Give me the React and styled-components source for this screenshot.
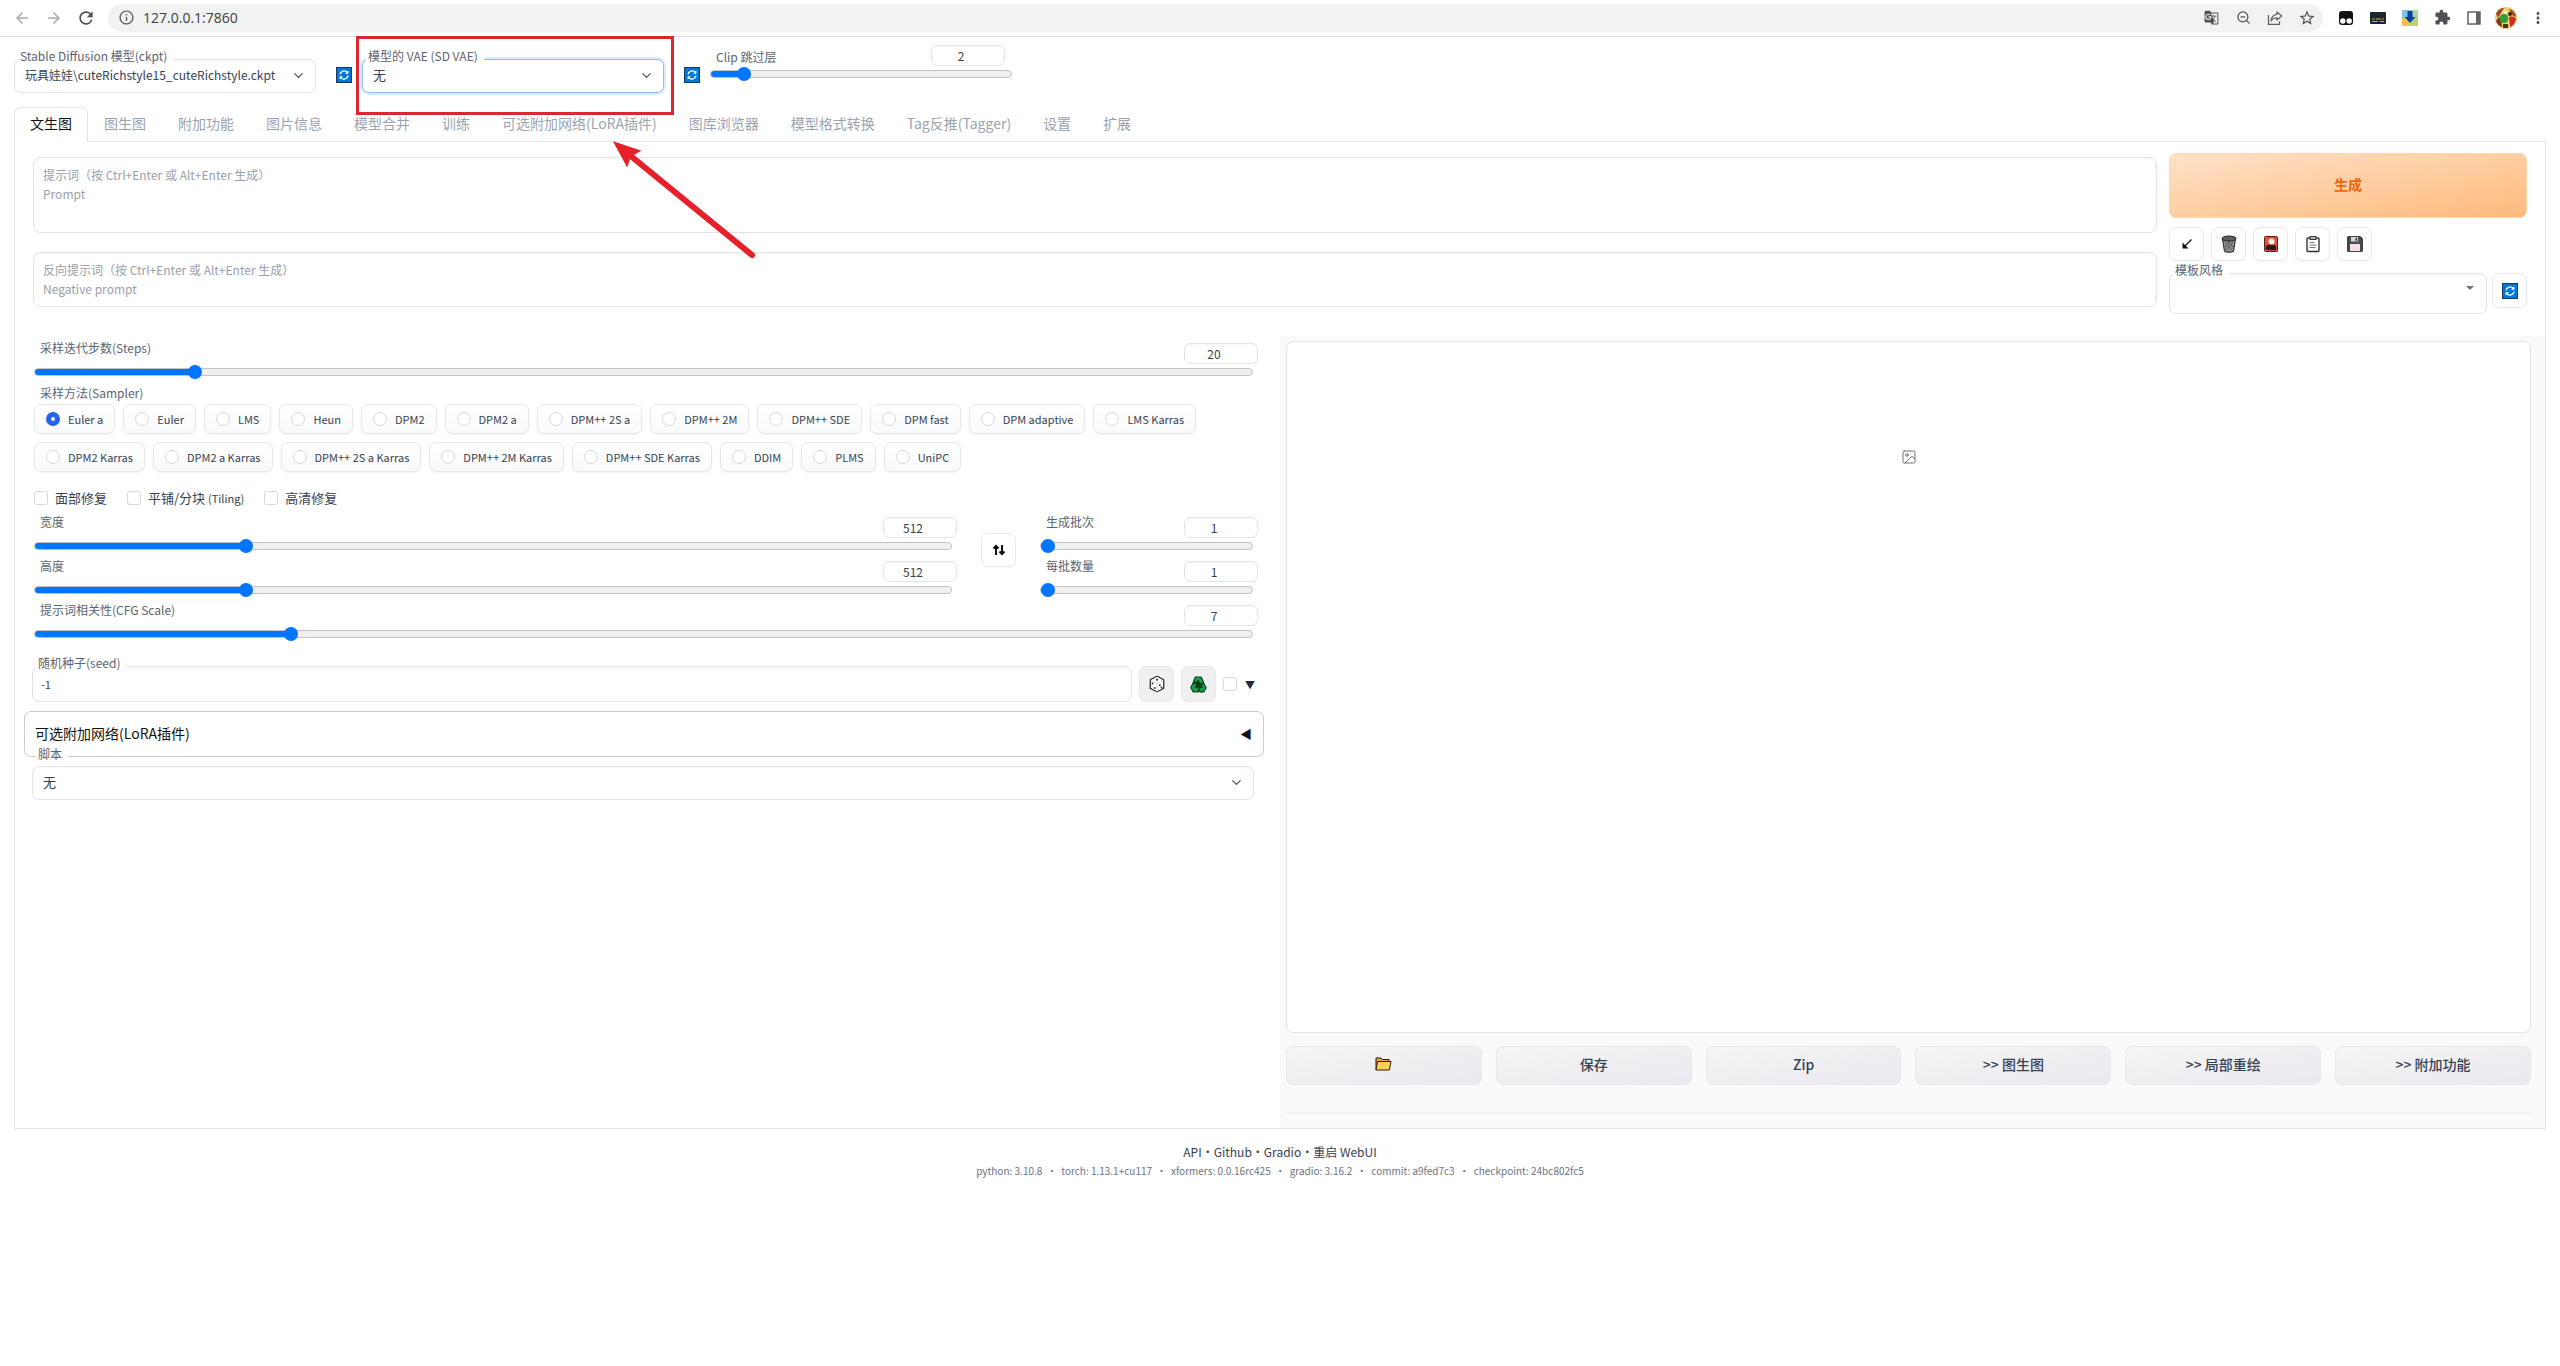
import React, { useState } from 'react';
import styled, { createGlobalStyle, css } from 'styled-components';
import { MdArrowBack, MdArrowForward, MdRefresh, MdInfoOutline, MdGTranslate, MdStarBorder, MdExtension, MdMoreVert } from 'react-icons/md';
import { ChevronDown, ZoomOut, Image as ImageIcon } from 'lucide-react';

const GlobalStyle = createGlobalStyle`
  * {
    box-sizing: border-box;
  }

  body {
    margin: 0;
    background: #fff;
    color: #374151;
    font-family: 'Noto Sans CJK SC', 'Noto Sans', sans-serif;
    font-size: 12px;
  }

  button, input, select, textarea {
    margin: 0;
    font-family: inherit;
    color: inherit;
  }

  button {
    cursor: pointer;
  }

  svg {
    display: block;
    flex-shrink: 0;
  }
`;

const BrowserBar = styled.header`
  display: flex;
  align-items: center;
  height: 37px;
  padding: 0 6px 1px;
  border-bottom: 1px solid #dadce0;
  color: #5f6368;
`;

const BarButton = styled.button`
  display: flex;
  align-items: center;
  justify-content: center;
  width: 32px;
  height: 28px;
  padding: 0;
  border: 0;
  background: none;
  color: ${props => (props.$dim ? '#a8abae' : '#4d5156')};
`;

const AddressBar = styled.div`
  display: flex;
  flex: 1;
  align-items: center;
  height: 28px;
  margin: 0 7px 0 6px;
  padding-left: 10px;
  border-radius: 14px;
  background: #f1f2f2;
`;

const Url = styled.input`
  flex: 1;
  height: 28px;
  padding: 0 8px;
  border: 0;
  background: none;
  outline: none;
  color: #3c4043;
  font-family: 'Open Sans', sans-serif;
  font-size: 14px;
`;

const Page = styled.main`
  position: relative;
  padding: 0 14px;
`;

const QuickSettings = styled.section`
  display: flex;
  align-items: flex-start;
  padding: 8px 0 14px;
`;

const Field = styled.div`
  position: relative;
  width: ${props => props.$width || 'auto'};
  flex: ${props => (props.$grow ? 1 : 'none')};
  margin-top: ${props => props.$top || 0}px;
`;

const FloatLabel = styled.label`
  position: absolute;
  top: -9px;
  left: 4px;
  z-index: 1;
  padding: 0 6px 0 2px;
  background: #fff;
  color: #5b6472;
  font-size: 12px;
  line-height: 12px;
`;

const controlBox = css`
  display: block;
  width: 100%;
  border: 1px solid ${props => (props.$focused ? '#93bbf8' : '#e2e4e8')};
  border-radius: 7px;
  background: #fff;
  outline: none;
  box-shadow: ${props => (props.$focused ? '0 0 0 2px #dbeafe' : 'inset 0 1px 3px rgba(0, 0, 0, 0.04)')};
`;

const Select = styled.select`
  ${controlBox}
  height: ${props => props.$height || 34}px;
  padding: 0 32px 3px 10px;
  appearance: none;
  color: #374151;
  font-size: ${props => (props.$small ? 12 : 13)}px;
`;

const SelectArrow = styled.span`
  position: absolute;
  top: 9px;
  right: 10px;
  color: #4b5563;
  pointer-events: none;
`;

const TextField = styled.input`
  ${controlBox}
  height: 36px;
  padding: 0 8px;
  font-size: 11px;
`;

const PlainIconButton = styled.button`
  padding: 0;
  margin: 22px 10px 0 20px;
  border: 0;
  background: none;
`;

const SliderBlock = styled.div`
  width: ${props => props.$width || '100%'};
`;

const SliderHead = styled.div`
  display: flex;
  align-items: flex-start;
  justify-content: space-between;
  height: 22px;
  padding: 0 ${props => (props.$inset ? 7 : 0)}px 0 6px;
`;

const SliderLabel = styled.label`
  color: #5b6472;
  font-size: 12px;
  line-height: 10px;
  padding-top: ${props => (props.$inset ? 7 : 0)}px;
`;

const NumberInput = styled.input`
  width: 74px;
  height: 21px;
  padding: 0 16px 0 2px;
  border: 1px solid #e2e4e8;
  border-radius: 6px;
  background: #fff;
  box-shadow: inset 0 1px 2px rgba(0, 0, 0, 0.04);
  font-size: 12px;
  text-align: center;
  appearance: textfield;

  &::-webkit-inner-spin-button {
    display: none;
  }
`;

const Range = styled.input`
  display: block;
  width: ${props => (props.$inset ? '100%' : 'calc(100% - 5px)')};
  height: 14px;
  appearance: none;
  background: none;

  &::-webkit-slider-runnable-track {
    height: 8px;
    border: 1px solid #c4c4c4;
    border-radius: 4px;
    background: linear-gradient(#0075ff, #0075ff) -1px -1px / calc(var(--fill) + 1px) 10px no-repeat border-box #efefef;
  }

  &::-webkit-slider-thumb {
    width: 14px;
    height: 14px;
    margin-top: -4px;
    appearance: none;
    border-radius: 50%;
    background: #0075ff;
  }
`;

const TabBar = styled.nav`
  display: flex;
`;

const Tab = styled.button`
  height: 35px;
  margin-bottom: -1px;
  padding: 0 15px 5px;
  border: 1px solid ${props => (props.$active ? '#e2e4e8' : 'transparent')};
  border-bottom: 0;
  border-radius: 7px 7px 0 0;
  background: ${props => (props.$active ? '#fff' : 'none')};
  color: ${props => (props.$active ? '#111' : '#9ca3af')};
  font-size: 14px;
  z-index: 1;
`;

const Panel = styled.section`
  border: 1px solid #e2e4e8;
`;

const PromptRow = styled.div`
  display: flex;
  gap: 12px;
  padding: 11px 18px 22px;
`;

const Prompts = styled.div`
  display: flex;
  flex: 1;
  flex-direction: column;
  gap: 19px;
  padding-top: 4px;
`;

const PromptBox = styled.textarea`
  ${controlBox}
  height: ${props => props.$height}px;
  padding: 7px 9px;
  resize: none;
  font-size: 12px;
  line-height: 19px;

  &::placeholder {
    color: #9a9fa8;
  }
`;

const Side = styled.div`
  width: 358px;
`;

const Generate = styled.button`
  display: block;
  width: 100%;
  height: 65px;
  padding: 0 0 4px;
  border: 1px solid #fed7aa;
  border-radius: 7px;
  background: linear-gradient(to bottom right, #ffe2c8, #fdba7c);
  color: #ea670c;
  font-size: 14px;
  font-weight: 600;
`;

const Tools = styled.div`
  display: flex;
  gap: 7px;
  margin: 9px 0 12px;
`;

const ToolButton = styled.button`
  display: flex;
  align-items: center;
  justify-content: center;
  width: 35px;
  height: ${props => props.$height || 34}px;
  padding: 0;
  border: 1px solid #e8eaed;
  border-radius: 7px;
  background: ${props => (props.$grey ? '#f0f0f1' : '#fff')};
  box-shadow: 0 1px 2px rgba(0, 0, 0, 0.04);
  color: #111;
`;

const StyleRow = styled.div`
  display: flex;
  gap: 5px;
`;

const Work = styled.div`
  display: grid;
  grid-template-columns: 1fr 1fr;
`;

const Settings = styled.div`
  padding: 7px 16px 0 9px;
`;

const Group = styled.div`
  padding: 0 6px 0 10px;
`;

const GroupLabel = styled.div`
  margin: 9px 0 6px 6px;
  color: #5b6472;
  font-size: 12px;
  line-height: 10px;
`;

const Samplers = styled.div`
  display: flex;
  flex-wrap: wrap;
  gap: 8px;
  max-width: 1180px;
`;

const SamplerOption = styled.label`
  display: flex;
  align-items: center;
  gap: 8px;
  height: 30px;
  padding: 0 11px;
  border: 1px solid #e5e7eb;
  border-radius: 7px;
  background: linear-gradient(#fff, #f9fafb);
  box-shadow: 0 1px 2px rgba(0, 0, 0, 0.05);
  font-size: 11px;
`;

const Radio = styled.input`
  width: 14px;
  height: 14px;
  appearance: none;
  border: 1px solid #d5d8dd;
  border-radius: 50%;
  background: #fff;

  &:checked {
    border: 5px solid #2563eb;
  }
`;

const Checks = styled.div`
  display: flex;
  gap: 20px;
  padding: 19px 0 12px;
`;

const CheckLabel = styled.label`
  display: flex;
  align-items: center;
  gap: 7px;
  height: 14px;
  font-size: 13px;
  line-height: 14px;

  small {
    font-size: 11px;
  }
`;

const Checkbox = styled.input`
  width: 14px;
  height: 14px;
  appearance: none;
  border: 1px solid #d5d8dd;
  border-radius: 3px;
  background: #fff;

  &:checked {
    background: #2563eb;
  }
`;

const SizeRow = styled.div`
  display: grid;
  grid-template-columns: 1fr 35px 218px;
  align-items: start;
  gap: 0 24px;
  margin-bottom: 8px;
`;

const Stack = styled.div`
  display: flex;
  flex-direction: column;
  gap: 8px;
`;

const SwapButton = styled(ToolButton)`
  margin-top: 16px;
`;

const SeedRow = styled.div`
  display: flex;
  align-items: center;
  gap: 7px;
  padding: 25px 9px 9px 8px;
`;

const SeedExtra = styled.label`
  display: flex;
  align-items: center;
  gap: 8px;
  color: #1f2937;
  font-size: 10px;
`;

const Accordion = styled.button`
  display: flex;
  align-items: center;
  justify-content: space-between;
  width: 100%;
  height: 46px;
  padding: 0 11px 2px 10px;
  border: 1px solid #c9ccd1;
  border-radius: 7px;
  background: #fff;
  color: #111;
  font-size: 14px;
`;

const AccordionMark = styled.span`
  font-size: 12px;
`;

const ScriptRow = styled.div`
  position: relative;
  padding: 9px 10px 0 8px;
`;

const ScriptLabel = styled(FloatLabel)`
  left: 12px;
`;

const Output = styled.div`
  padding: 5px 14px 14px 6px;
  background: #fafafa;
`;

const Gallery = styled.div`
  display: flex;
  justify-content: center;
  height: 692px;
  padding-top: 107px;
  border: 1px solid #e2e4e8;
  border-radius: 7px;
  background: #fff;
  color: #6b7280;
`;

const Actions = styled.div`
  display: flex;
  gap: 14px;
  margin: 13px 0 27px;
`;

const ActionButton = styled.button`
  display: flex;
  flex: 1;
  align-items: center;
  justify-content: center;
  height: 39px;
  padding: 0 0 3px;
  border: 1px solid #e8e8ec;
  border-radius: 7px;
  background: linear-gradient(to bottom right, #f5f5f6, #e9e9ef);
  color: #374151;
  font-size: 14px;
  font-weight: 500;
`;

const Divider = styled.hr`
  height: 2px;
  margin: 0;
  border: 0;
  background: #f0f0f1;
`;

const Footer = styled.footer`
  padding-top: 15px;
  text-align: center;
`;

const Links = styled.div`
  color: #374151;
  font-size: 12px;
  line-height: 16px;

  a {
    color: inherit;
    text-decoration: none;
  }
`;

const Versions = styled.div`
  margin-top: 4px;
  color: #6b7280;
  font-size: 10px;
  line-height: 14px;
  white-space: pre;
`;

const Annotation = styled.svg`
  position: absolute;
  top: -1px;
  left: 356px;
  z-index: 2;
  pointer-events: none;
`;

const RefreshEmoji = ({ size = 16 }) => (
  <svg width={size} height={size} viewBox="0 0 16 16" aria-hidden="true">
    <rect x="0.5" y="0.5" width="15" height="15" fill="#0078d7" stroke="#173a5e" />
    <path d="M4 7.4a4.1 4.1 0 0 1 7.2-2M12 8.6a4.1 4.1 0 0 1-7.2 2" fill="none" stroke="#fff" strokeWidth="1.4" />
    <path d="M12.4 3.4v3.4H9zM3.6 12.6V9.2H7z" fill="#fff" />
  </svg>
);

const ShareIcon = () => (
  <svg width="16" height="16" viewBox="0 0 16 16" fill="none" stroke="#5f6368" strokeWidth="1.3" aria-hidden="true">
    <path d="M1.5 5v9.3h11v-3" />
    <path d="M10 2l4.7 4L10 10V7.8C7 7.8 5.2 8.8 4 11c.3-3.8 2.4-6.3 6-6.7z" strokeLinejoin="round" />
  </svg>
);

const TampermonkeyIcon = () => (
  <svg width="16" height="16" viewBox="0 0 16 16" aria-hidden="true">
    <rect x="1" y="1" width="14" height="14" rx="3" fill="#111" />
    <circle cx="4.8" cy="11" r="2.7" fill="#fff" />
    <circle cx="11.2" cy="11" r="2.7" fill="#fff" />
  </svg>
);

const CaptionIcon = () => (
  <svg width="16" height="14" viewBox="0 0 16 14" aria-hidden="true">
    <rect y="1" width="16" height="12" rx="1" fill="#1c262c" />
    <path d="M2 8h3M12 8h2M2 10.5h6" stroke="#8fb0b8" strokeWidth="1" />
    <path d="M6 8h5M10 10.5h4" stroke="#e6b93c" strokeWidth="1" />
  </svg>
);

const DownloaderIcon = () => (
  <svg width="16" height="16" viewBox="0 0 16 16" aria-hidden="true">
    <path d="M0 0h8v8H0z" fill="#7fc4ee" />
    <path d="M8 0h8v8H8z" fill="#a9d7a0" />
    <path d="M0 8h8v8H0z" fill="#f5c443" />
    <path d="M8 8h8v8H8z" fill="#b6d56b" />
    <path d="M5.5 1h5v6h3L8 13 2.500 7h3z" fill="#0b3fa8" />
  </svg>
);

const SidePanelIcon = () => (
  <svg width="16" height="16" viewBox="0 0 16 16" aria-hidden="true">
    <rect x="2" y="2" width="12" height="12" fill="none" stroke="#5f6368" strokeWidth="1.5" />
    <path d="M10 2h4v12h-4z" fill="#5f6368" />
  </svg>
);

const Avatar = () => (
  <svg width="22" height="22" viewBox="0 0 22 22" aria-hidden="true">
    <circle cx="11" cy="11" r="11" fill="#ead06a" />
    <path d="M1 7c1-4 5-6 8-6l-3 5-3 5zM14 2c4 1 7 4 7 8l-4-2z" fill="#a8452a" />
    <path d="M1 14c2-3 3-4 5-4l1 10C4 19 2 17 1 14z" fill="#7c3a20" />
    <rect x="5" y="7" width="8" height="9" rx="4" fill="#2f9e35" />
    <path d="M14 10c4-1 6 0 7 2-1 4-3 7-6 8z" fill="#d4262a" />
    <circle cx="10" cy="5" r="2" fill="#fff2c9" />
    <circle cx="15" cy="7" r="2" fill="#3a2418" />
    <path d="M8 17h5v4H8z" fill="#4a3323" />
  </svg>
);

const ArrowSwIcon = () => (
  <svg width="12" height="12" viewBox="0 0 12 12" aria-hidden="true">
    <path d="M10.5 1.5L3 9" stroke="#111" strokeWidth="1.2" />
    <path d="M1.5 4.5v6h6z" fill="#111" />
  </svg>
);

const TrashIcon = () => (
  <svg width="16" height="18" viewBox="0 0 16 18" aria-hidden="true">
    <path d="M1.5 4l2 12.5c2 1 7 1 9 0l2-12.5z" fill="#8b8f91" stroke="#222" />
    <path d="M4 7l7 8M7 6l5 6M12 7l-7 8M9 6l-5 6" stroke="#4a4d4f" strokeWidth="0.8" />
    <ellipse cx="8" cy="3.5" rx="7" ry="2.5" fill="#5c6062" stroke="#222" />
  </svg>
);

const CardIcon = () => (
  <svg width="14" height="18" viewBox="0 0 14 18" aria-hidden="true">
    <rect x="0.5" y="1.5" width="13" height="15" rx="1" fill="#e0503c" stroke="#5e1f1c" />
    <path d="M2 11c3-2 7-2 10 0v4H2z" fill="#2c1b1b" />
    <circle cx="7.5" cy="6.5" r="3" fill="#fff3e6" />
  </svg>
);

const ClipboardIcon = () => (
  <svg width="14" height="18" viewBox="0 0 14 18" aria-hidden="true">
    <rect x="1" y="3" width="12" height="13.5" rx="1" fill="#fff" stroke="#333" strokeWidth="1.4" />
    <rect x="4" y="1.5" width="6" height="3" fill="#b9bcbe" stroke="#333" />
    <path d="M3.5 7.5h5M3.5 10h7M3.5 12.5h6" stroke="#777" />
  </svg>
);

const FloppyIcon = () => (
  <svg width="16" height="16" viewBox="0 0 16 16" aria-hidden="true">
    <path d="M0.7 0.7h12.8l1.8 1.8v12.8H0.7z" fill="#4b4f54" stroke="#222" />
    <path d="M4 1h7v4.5H4z" fill="#d5d8dc" />
    <path d="M8.5 1.7h1.5v3H8.5z" fill="#333" />
    <path d="M3 8h10v7H3z" fill="#f7dfe6" />
  </svg>
);

const SwapIcon = () => (
  <svg width="14" height="12" viewBox="0 0 14 12" fill="none" stroke="#111" strokeWidth="2" aria-hidden="true">
    <path d="M4 11V2M1.5 4.5L4 2l2.500 2.500M10 1v9M7.500 7.500L10 10l2.500-2.500" />
  </svg>
);

const DiceIcon = () => (
  <svg width="18" height="18" viewBox="0 0 16 16" aria-hidden="true">
    <path d="M8 1l6 3.300v7.400L8 15l-6-3.300V4.300z" fill="#fff" stroke="#111" strokeLinejoin="round" />
    <path d="M2 4.300l6 3.200 6-3.200M8 7.500V15" fill="none" stroke="#c4c4c4" strokeWidth="0.700" />
    <g fill="#222">
      <circle cx="8" cy="4.300" r="0.900" />
      <circle cx="4" cy="7.500" r="0.800" />
      <circle cx="6" cy="11.500" r="0.800" />
      <circle cx="10.500" cy="9" r="0.800" />
      <circle cx="12" cy="11" r="0.800" />
    </g>
  </svg>
);

const RecycleIcon = () => (
  <svg width="17" height="17" viewBox="0 0 16 16" aria-hidden="true">
    <path d="M5 2h6l4 9-3 4H4l-3-4z" fill="#0b3d1c" />
    <g fill="#18a046" stroke="#0b3d1c" strokeWidth="1" strokeLinejoin="round">
      <path d="M5 1h5.500L13 6l-3.500 1.500L7.500 4 6 6.500 3.300 5z" />
      <path d="M3 6l3.500 2L5 10.500h3V15H3L0.800 11z" />
      <path d="M13 7l2.300 4L13 15h-2.500v0.500L7.700 12.700l2.800-3.200v1.300h1L10 8.500z" />
    </g>
  </svg>
);

const FolderIcon = () => (
  <svg width="17" height="14" viewBox="0 0 17 14" aria-hidden="true">
    <path d="M1 13V1h5l1.500 1.500H14V5" fill="#e9a93a" stroke="#2a1c08" />
    <path d="M1 13L2.500 4.500H16L14.300 13z" fill="#ffcf56" stroke="#2a1c08" strokeLinejoin="round" />
  </svg>
);

const Slider = ({ id, label, min, max, initial, width, inset }) => {
  const [value, setValue] = useState(initial);
  const ratio = (value - min) / (max - min);
  const fill = `calc(${ratio * 100}% + ${7 - 14 * ratio}px)`;

  return (
    <SliderBlock $width={width}>
      <SliderHead $inset={inset}>
        <SliderLabel htmlFor={id} $inset={inset}>{label}</SliderLabel>
        <NumberInput
          type="number"
          aria-label={label}
          min={min}
          max={max}
          value={value}
          onChange={(e) => setValue(Number(e.target.value))}
        />
      </SliderHead>
      <Range
        id={id}
        type="range"
        min={min}
        max={max}
        value={value}
        $inset={inset}
        style={{ '--fill': fill }}
        onChange={(e) => setValue(Number(e.target.value))}
      />
    </SliderBlock>
  );
};

const TABS = [
  '文生图', '图生图', '附加功能', '图片信息', '模型合并', '训练', '可选附加网络(LoRA插件)',
  '图库浏览器', '模型格式转换', 'Tag反推(Tagger)', '设置', '扩展',
];

const SAMPLERS = [
  'Euler a', 'Euler', 'LMS', 'Heun', 'DPM2', 'DPM2 a', 'DPM++ 2S a', 'DPM++ 2M', 'DPM++ SDE',
  'DPM fast', 'DPM adaptive', 'LMS Karras', 'DPM2 Karras', 'DPM2 a Karras', 'DPM++ 2S a Karras',
  'DPM++ 2M Karras', 'DPM++ SDE Karras', 'DDIM', 'PLMS', 'UniPC',
];

const VERSIONS = [
  'python: 3.10.8', 'torch: 1.13.1+cu117', 'xformers: 0.0.16rc425',
  'gradio: 3.16.2', 'commit: a9fed7c3', 'checkpoint: 24bc802fc5',
];

const App = () => {
  const [tab, setTab] = useState(TABS[0]);
  const [sampler, setSampler] = useState(SAMPLERS[0]);

  return (
    <>
      <GlobalStyle />
      <BrowserBar>
        <BarButton $dim aria-label="后退"><MdArrowBack size={18} /></BarButton>
        <BarButton $dim aria-label="前进"><MdArrowForward size={18} /></BarButton>
        <BarButton aria-label="刷新"><MdRefresh size={20} /></BarButton>
        <AddressBar>
          <MdInfoOutline size={17} />
          <Url type="text" aria-label="地址" defaultValue="127.0.0.1:7860" />
          <BarButton aria-label="翻译"><MdGTranslate size={15} /></BarButton>
          <BarButton aria-label="缩小"><ZoomOut size={15} /></BarButton>
          <BarButton aria-label="分享"><ShareIcon /></BarButton>
          <BarButton aria-label="收藏"><MdStarBorder size={18} /></BarButton>
        </AddressBar>
        <BarButton aria-label="Tampermonkey"><TampermonkeyIcon /></BarButton>
        <BarButton aria-label="字幕"><CaptionIcon /></BarButton>
        <BarButton aria-label="下载"><DownloaderIcon /></BarButton>
        <BarButton aria-label="扩展程序"><MdExtension size={17} /></BarButton>
        <BarButton aria-label="侧边栏"><SidePanelIcon /></BarButton>
        <BarButton aria-label="用户"><Avatar /></BarButton>
        <BarButton aria-label="菜单"><MdMoreVert size={18} /></BarButton>
      </BrowserBar>

      <Page>
        <QuickSettings>
          <Field $width="302px" $top={14}>
            <FloatLabel htmlFor="ckpt">Stable Diffusion 模型(ckpt)</FloatLabel>
            <Select id="ckpt" $small>
              <option>玩具娃娃\cuteRichstyle15_cuteRichstyle.ckpt</option>
            </Select>
            <SelectArrow><ChevronDown size={15} /></SelectArrow>
          </Field>
          <PlainIconButton aria-label="刷新模型"><RefreshEmoji /></PlainIconButton>
          <Field $width="302px" $top={14}>
            <FloatLabel htmlFor="vae">模型的 VAE (SD VAE)</FloatLabel>
            <Select id="vae" $focused>
              <option>无</option>
            </Select>
            <SelectArrow><ChevronDown size={15} /></SelectArrow>
          </Field>
          <PlainIconButton aria-label="刷新 VAE"><RefreshEmoji /></PlainIconButton>
          <Slider id="clip" label="Clip 跳过层" min={1} max={12} initial={2} width="302px" inset />
        </QuickSettings>

        <TabBar>
          {TABS.map((name) => (
            <Tab key={name} $active={name === tab} onClick={() => setTab(name)}>{name}</Tab>
          ))}
        </TabBar>

        <Panel>
          <PromptRow>
            <Prompts>
              <PromptBox $height={76} aria-label="提示词" placeholder={'提示词（按 Ctrl+Enter 或 Alt+Enter 生成）\nPrompt'} />
              <PromptBox $height={55} aria-label="反向提示词" placeholder={'反向提示词（按 Ctrl+Enter 或 Alt+Enter 生成）\nNegative prompt'} />
            </Prompts>
            <Side>
              <Generate>生成</Generate>
              <Tools>
                <ToolButton aria-label="读取参数"><ArrowSwIcon /></ToolButton>
                <ToolButton aria-label="清空"><TrashIcon /></ToolButton>
                <ToolButton aria-label="附加网络"><CardIcon /></ToolButton>
                <ToolButton aria-label="应用模板"><ClipboardIcon /></ToolButton>
                <ToolButton aria-label="保存模板"><FloppyIcon /></ToolButton>
              </Tools>
              <StyleRow>
                <Field $grow>
                  <FloatLabel htmlFor="styles">模板风格</FloatLabel>
                  <Select id="styles" $height={41} defaultValue="">
                    <option value="" aria-label="空" />
                  </Select>
                  <SelectArrow>
                    <svg width="14" height="14" viewBox="0 0 14 14" aria-hidden="true"><path d="M3 4h8L7 8z" fill="#6b7280" /></svg>
                  </SelectArrow>
                </Field>
                <ToolButton $height={35} aria-label="刷新模板"><RefreshEmoji /></ToolButton>
              </StyleRow>
            </Side>
          </PromptRow>

          <Work>
            <Settings>
              <Group>
                <Slider id="steps" label="采样迭代步数(Steps)" min={1} max={150} initial={20} />
                <GroupLabel id="sampler-label">采样方法(Sampler)</GroupLabel>
                <Samplers role="radiogroup" aria-labelledby="sampler-label">
                  {SAMPLERS.map((name) => (
                    <SamplerOption key={name}>
                      <Radio type="radio" name="sampler" checked={name === sampler} onChange={() => setSampler(name)} />
                      {name}
                    </SamplerOption>
                  ))}
                </Samplers>
                <Checks>
                  <CheckLabel><Checkbox type="checkbox" />面部修复</CheckLabel>
                  <CheckLabel><Checkbox type="checkbox" /><span>平铺/分块 <small>(Tiling)</small></span></CheckLabel>
                  <CheckLabel><Checkbox type="checkbox" />高清修复</CheckLabel>
                </Checks>
                <SizeRow>
                  <Stack>
                    <Slider id="width" label="宽度" min={64} max={2048} initial={512} />
                    <Slider id="height" label="高度" min={64} max={2048} initial={512} />
                  </Stack>
                  <SwapButton aria-label="交换宽高"><SwapIcon /></SwapButton>
                  <Stack>
                    <Slider id="batch-count" label="生成批次" min={1} max={100} initial={1} />
                    <Slider id="batch-size" label="每批数量" min={1} max={8} initial={1} />
                  </Stack>
                </SizeRow>
                <Slider id="cfg" label="提示词相关性(CFG Scale)" min={1} max={30} initial={7} />
              </Group>

              <SeedRow>
                <Field $grow>
                  <FloatLabel htmlFor="seed">随机种子(seed)</FloatLabel>
                  <TextField id="seed" type="text" defaultValue="-1" />
                </Field>
                <ToolButton $grey $height={36} aria-label="随机"><DiceIcon /></ToolButton>
                <ToolButton $grey $height={36} aria-label="复用种子"><RecycleIcon /></ToolButton>
                <SeedExtra><Checkbox type="checkbox" />▼</SeedExtra>
              </SeedRow>

              <Accordion>
                <span>可选附加网络(LoRA插件)</span>
                <AccordionMark>◀</AccordionMark>
              </Accordion>

              <ScriptRow>
                <ScriptLabel htmlFor="script">脚本</ScriptLabel>
                <Field>
                  <Select id="script">
                    <option>无</option>
                  </Select>
                  <SelectArrow><ChevronDown size={15} /></SelectArrow>
                </Field>
              </ScriptRow>
            </Settings>

            <Output>
              <Gallery><ImageIcon size={16} strokeWidth={1.5} /></Gallery>
              <Actions>
                <ActionButton aria-label="打开文件夹"><FolderIcon /></ActionButton>
                <ActionButton>保存</ActionButton>
                <ActionButton>Zip</ActionButton>
                <ActionButton>&gt;&gt; 图生图</ActionButton>
                <ActionButton>&gt;&gt; 局部重绘</ActionButton>
                <ActionButton>&gt;&gt; 附加功能</ActionButton>
              </Actions>
              <Divider />
            </Output>
          </Work>
        </Panel>

        <Footer>
          <Links>
            <a href="#api">API</a>・<a href="#github">Github</a>・<a href="#gradio">Gradio</a>・<a href="#restart">重启 WebUI</a>
          </Links>
          <Versions>{VERSIONS.join('  •  ')}</Versions>
        </Footer>

        <Annotation width="400" height="224" viewBox="0 0 400 224" aria-hidden="true">
          <rect x="1.5" y="1.5" width="315" height="76" fill="none" stroke="#dc2630" strokeWidth="3" />
          <path d="M396 219L276 121" stroke="#e8202a" strokeWidth="6" strokeLinecap="round" />
          <path d="M259 107l24 8-9 5-3 9z" fill="#e8202a" stroke="#e8202a" strokeWidth="2" />
        </Annotation>
      </Page>
    </>
  );
};

export default App;
